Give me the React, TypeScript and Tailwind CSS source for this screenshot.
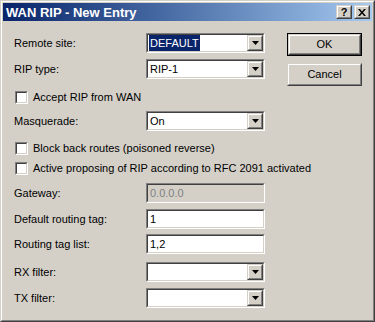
import React from "react";

const font = { fontFamily: '"Liberation Sans", Arial, sans-serif' };

const Sunken = ({ children, className = "" }: { children: React.ReactNode; className?: string }) => (
  <div className={`border border-t-[#808080] border-l-[#808080] border-b-white border-r-white ${className}`}>
    <div className="h-full w-full border border-t-[#404040] border-l-[#404040] border-b-[#d4d0c8] border-r-[#d4d0c8]">
      {children}
    </div>
  </div>
);

const Raised = ({ children, className = "" }: { children: React.ReactNode; className?: string }) => (
  <div className={`border border-t-[#d4d0c8] border-l-[#d4d0c8] border-b-[#404040] border-r-[#404040] bg-[#d4d0c8] ${className}`}>
    <div className="flex h-full w-full items-center justify-center border border-t-white border-l-white border-b-[#808080] border-r-[#808080]">
      {children}
    </div>
  </div>
);

const Arrow = () => (
  <svg width="7" height="4" viewBox="0 0 7 4">
    <path d="M0 0h7L3.5 4z" fill="#000" />
  </svg>
);

const Combo = ({ value, selected }: { value?: string; selected?: boolean }) => (
  <Sunken className="h-[20px] w-[119px]">
    <div className="flex h-full items-center bg-white">
      <div className="flex-1 pl-[1px] text-[11px] leading-none text-black">
        {value && (
          <span className={selected ? "bg-[#0a246a] px-[1px] py-[2px] text-white" : "px-[1px]"}>{value}</span>
        )}
      </div>
      <Raised className="h-[16px] w-[16px]">
        <Arrow />
      </Raised>
    </div>
  </Sunken>
);

const Edit = ({ value, disabled }: { value: string; disabled?: boolean }) => (
  <Sunken className="h-[20px] w-[119px]">
    <div
      className={`flex h-full items-center pl-[2px] text-[11px] leading-none ${
        disabled ? "bg-[#d4d0c8] text-[#808080]" : "bg-white text-black"
      }`}
    >
      {value}
    </div>
  </Sunken>
);

const Check = ({ label }: { label: string }) => (
  <div className="flex h-[20px] items-center whitespace-nowrap">
    <Sunken className="ml-[1px] h-[13px] w-[13px] shrink-0">
      <div className="h-full w-full bg-white" />
    </Sunken>
    <span className="ml-[5px] text-[11px] text-black">{label}</span>
  </div>
);

const Row = ({ label, children, className = "" }: { label: string; children: React.ReactNode; className?: string }) => (
  <div className={`flex h-[20px] items-center ${className}`}>
    <span className="w-[132px] text-[11px] text-black">{label}</span>
    {children}
  </div>
);

const Button = ({ label, isDefault }: { label: string; isDefault?: boolean }) => (
  <div className={`h-[23px] w-[75px] ${isDefault ? "border border-black" : ""}`}>
    <Raised className="h-full w-full">
      <span className="text-[11px] text-black">{label}</span>
    </Raised>
  </div>
);

export default function App() {
  return (
    <div style={font} className="h-[322px] w-[375px] border border-t-[#d4d0c8] border-l-[#d4d0c8] border-b-[#404040] border-r-[#404040] bg-[#d4d0c8]">
      <div className="flex h-full flex-col border border-t-white border-l-white border-b-[#808080] border-r-[#808080] p-[1px]">
        {/* title bar */}
        <div className="flex h-[18px] items-center bg-gradient-to-r from-[#0a246a] to-[#a6caf0] pl-[3px] pr-[2px]">
          <span className="flex-1 text-[13px] font-bold leading-none text-white">WAN RIP - New Entry</span>
          <Raised className="h-[14px] w-[16px]">
            <span className="text-[11px] font-bold leading-none text-black">?</span>
          </Raised>
          <Raised className="ml-[2px] h-[14px] w-[16px]">
            <svg width="8" height="7" viewBox="0 0 8 7">
              <path d="M0 0h2l2 2.5L6 0h2L5 3.5 8 7H6L4 4.5 2 7H0l3-3.5z" fill="#000" />
            </svg>
          </Raised>
        </div>

        {/* body */}
        <div className="flex flex-1 pl-[11px] pt-[12px]">
          <div className="flex w-[251px] flex-col">
            <Row label="Remote site:">
              <Combo value="DEFAULT" selected />
            </Row>
            <Row label="RIP type:" className="mt-[6px]">
              <Combo value="RIP-1" />
            </Row>
            <div className="mt-[8px]">
              <Check label="Accept RIP from WAN" />
            </div>
            <Row label="Masquerade:" className="mt-[4px]">
              <Combo value="On" />
            </Row>
            <div className="mt-[7px]">
              <Check label="Block back routes (poisoned reverse)" />
            </div>
            <Check label="Active proposing of RIP according to RFC 2091 activated" />
            <Row label="Gateway:" className="mt-[5px]">
              <Edit value="0.0.0.0" disabled />
            </Row>
            <Row label="Default routing tag:" className="mt-[6px]">
              <Edit value="1" />
            </Row>
            <Row label="Routing tag list:" className="mt-[5px]">
              <Edit value="1,2" />
            </Row>
            <Row label="RX filter:" className="mt-[8px]">
              <Combo />
            </Row>
            <Row label="TX filter:" className="mt-[6px]">
              <Combo />
            </Row>
          </div>
          <div className="ml-[22px] flex flex-col">
            <Button label="OK" isDefault />
            <div className="mt-[7px]">
              <Button label="Cancel" />
            </div>
          </div>
        </div>
      </div>
    </div>
  );
}
